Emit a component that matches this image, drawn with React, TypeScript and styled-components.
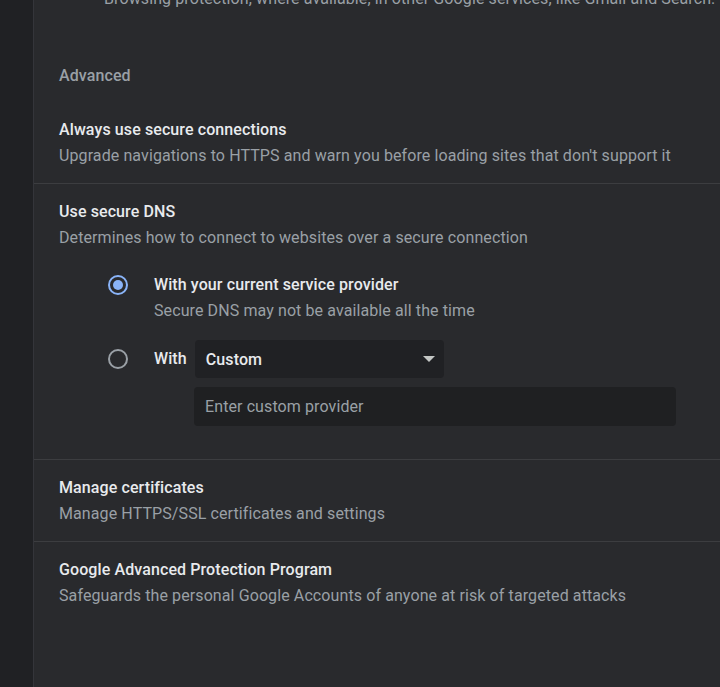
import React from "react";
import styled, { createGlobalStyle } from "styled-components";

const Global = createGlobalStyle`
  html, body { margin: 0; padding: 0; background: #292a2d; }
  body { font-family: Roboto, "Noto Sans", "Liberation Sans", sans-serif; overflow: hidden; }
  #root { height: 687px; }
`;

const Shell = styled.div`
  display: flex;
  height: 687px;
  width: 720px;
  overflow: hidden;
`;

const Sidebar = styled.div`
  width: 33px;
  flex: none;
  background: #202124;
  border-right: 1px solid #34353a;
`;

const Card = styled.main`
  flex: 1;
  min-width: 0;
  background: #292a2d;
  display: flex;
  flex-direction: column;
`;

const TopNote = styled.div`
  margin-top: -12px;
  padding-left: 70px;
  font-size: 16px;
  letter-spacing: 0.1px;
  line-height: 22px;
  color: #9aa0a6;
  white-space: nowrap;
  overflow: hidden;
`;

const SectionHeading = styled.h2`
  margin: 0;
  padding: 55px 25px 15px;
  font-size: 16px;
  letter-spacing: 0.1px;
  line-height: 22px;
  font-weight: 500;
  color: #9aa0a6;
`;

const Row = styled.section<{ $last?: boolean }>`
  padding: 17px 25px 16px;
  border-bottom: ${(p) => (p.$last ? "none" : "1px solid #3c3d40")};
`;

const Title = styled.div`
  font-size: 16px;
  letter-spacing: 0.1px;
  line-height: 22px;
  font-weight: 500;
  color: #e8eaed;
`;

const Sub = styled.div`
  margin-top: 4px;
  font-size: 16px;
  letter-spacing: 0.1px;
  line-height: 22px;
  color: #9aa0a6;
`;

const RadioGroup = styled.div`
  padding: 25px 0 17px 49px;
  display: flex;
  flex-direction: column;
  gap: 18px;
`;

const RadioRow = styled.div`
  display: flex;
  align-items: flex-start;
  gap: 26px;
`;

const RadioCircle = styled.span<{ $checked?: boolean; $offset?: number }>`
  flex: none;
  box-sizing: border-box;
  width: 20px;
  height: 20px;
  margin-top: ${(p) => p.$offset ?? 1}px;
  border-radius: 50%;
  border: 2px solid ${(p) => (p.$checked ? "#8ab4f8" : "#9aa0a6")};
  display: flex;
  align-items: center;
  justify-content: center;
  &::after {
    content: "";
    width: 10px;
    height: 10px;
    border-radius: 50%;
    background: ${(p) => (p.$checked ? "#8ab4f8" : "transparent")};
  }
`;

const RadioBody = styled.div`
  display: flex;
  flex-direction: column;
`;

const CustomLine = styled.div`
  display: flex;
  align-items: center;
  gap: 8px;
`;

const WithLabel = styled.span`
  font-size: 16px;
  letter-spacing: 0.1px;
  line-height: 22px;
  font-weight: 500;
  color: #e8eaed;
`;

const Select = styled.div`
  box-sizing: border-box;
  width: 249px;
  height: 38px;
  border-radius: 4px;
  background: #202124;
  display: flex;
  align-items: center;
  justify-content: space-between;
  padding: 0 9px 0 11px;
  font-size: 16px;
  letter-spacing: 0.1px;
  font-weight: 500;
  color: #e8eaed;
`;

const Arrow = styled.span`
  width: 0;
  height: 0;
  border-left: 6px solid transparent;
  border-right: 6px solid transparent;
  border-top: 6px solid #c4c7c5;
`;

const ProviderInput = styled.div`
  box-sizing: border-box;
  margin: 9px 0 0 40px;
  width: 482px;
  height: 39px;
  border-radius: 4px;
  background: #1f2022;
  display: flex;
  align-items: center;
  padding-left: 11px;
  font-size: 16px;
  letter-spacing: 0.1px;
  color: #9aa0a6;
`;

const Filler = styled.div`
  flex: 1;
`;

export default function App() {
  return (
    <>
      <Global />
      <Shell>
        <Sidebar />
        <Card>
          <TopNote>
            Browsing protection, where available, in other Google services, like Gmail and Search.
          </TopNote>
          <SectionHeading>Advanced</SectionHeading>
          <Row>
            <Title>Always use secure connections</Title>
            <Sub>Upgrade navigations to HTTPS and warn you before loading sites that don't support it</Sub>
          </Row>
          <Row>
            <Title>Use secure DNS</Title>
            <Sub>Determines how to connect to websites over a secure connection</Sub>
            <RadioGroup>
              <RadioRow>
                <RadioCircle $checked />
                <RadioBody>
                  <Title>With your current service provider</Title>
                  <Sub>Secure DNS may not be available all the time</Sub>
                </RadioBody>
              </RadioRow>
              <RadioRow>
                <RadioCircle $offset={9} />
                <RadioBody>
                  <CustomLine>
                    <WithLabel>With</WithLabel>
                    <Select>
                      Custom
                      <Arrow />
                    </Select>
                  </CustomLine>
                  <ProviderInput>Enter custom provider</ProviderInput>
                </RadioBody>
              </RadioRow>
            </RadioGroup>
          </Row>
          <Row>
            <Title>Manage certificates</Title>
            <Sub>Manage HTTPS/SSL certificates and settings</Sub>
          </Row>
          <Row $last>
            <Title>Google Advanced Protection Program</Title>
            <Sub>Safeguards the personal Google Accounts of anyone at risk of targeted attacks</Sub>
          </Row>
          <Filler />
        </Card>
      </Shell>
    </>
  );
}
